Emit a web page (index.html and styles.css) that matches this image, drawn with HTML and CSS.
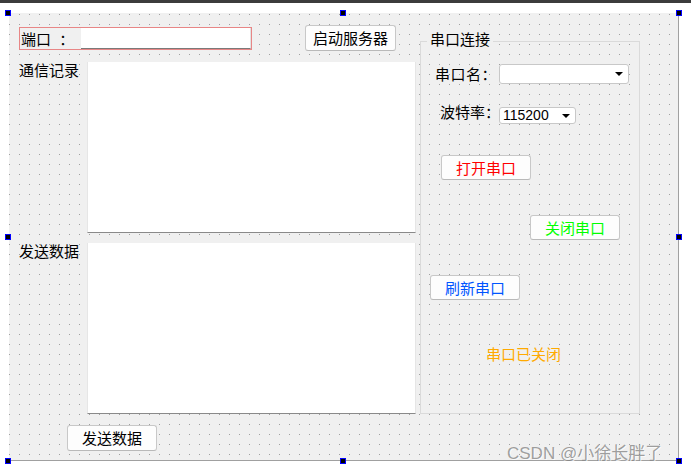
FILE: index.html
```html
<!DOCTYPE html>
<html lang="zh-CN">
<head>
<meta charset="utf-8">
<title>Form</title>
<link rel="stylesheet" href="styles.css">
</head>
<body>
<div class="topbar"></div>
<div class="canvas">
  <div class="left">
    <div class="toprow">
      <div class="portbox">
        <span class="lbl portlbl">端口 ：</span>
        <div class="lineedit"></div>
      </div>
      <button class="btn startbtn">启动服务器</button>
    </div>
    <div class="editrow first">
      <span class="lbl sidelbl">通信记录</span>
      <div class="textedit"></div>
    </div>
    <div class="editrow second">
      <span class="lbl sidelbl">发送数据</span>
      <div class="textedit"></div>
    </div>
    <button class="btn sendbtn">发送数据</button>
  </div>
  <div class="group">
    <span class="grouptitle">串口连接</span>
    <div class="frow r1">
      <span class="lbl namelbl">串口名：</span>
      <div class="combo wide"><span class="arrow"></span></div>
    </div>
    <div class="frow r2">
      <span class="lbl baudlbl">波特率：</span>
      <div class="combo narrow"><span class="val">115200</span><span class="arrow"></span></div>
    </div>
    <button class="btn gbtn open">打开串口</button>
    <button class="btn gbtn close">关闭串口</button>
    <button class="btn gbtn refresh">刷新串口</button>
    <div class="status">串口已关闭</div>
  </div>
  <span class="handle h-tl"></span>
  <span class="handle h-tm"></span>
  <span class="handle h-tr"></span>
  <span class="handle h-ml"></span>
  <span class="handle h-mr"></span>
  <span class="handle h-bl"></span>
  <span class="handle h-bm"></span>
  <span class="handle h-br"></span>
</div>
<div class="watermark">CSDN @小徐长胖了</div>
</body>
</html>
```
FILE: styles.css
```css
* { box-sizing: border-box; }
html, body { margin: 0; padding: 0; background: #ffffff; }
body {
  position: relative;
  width: 691px;
  height: 474px;
  overflow: hidden;
  font-family: "Noto Sans CJK SC", "Liberation Sans", sans-serif;
  font-size: 15px;
  color: #000;
}
.topbar { height: 3px; background: #3c3c3c; }

.canvas {
  position: relative;
  margin: 10px 0 0 9px;
  width: 670px;
  height: 448px;
  border-right: 1px solid #a0a0a0;
  border-bottom: 1px solid #a0a0a0;
  background-color: #f0f0f0;
  background-image: radial-gradient(circle at 0.5px 0.5px, #a0a0a0 0.6px, rgba(160,160,160,0) 0.9px);
  background-size: 10px 10px;
  background-position: 10px 1px;
  display: flex;
  align-items: flex-start;
}

.lbl { line-height: 16px; white-space: pre; }

.left {
  padding: 12px 0 0 10px;
  display: flex;
  flex-direction: column;
  align-items: flex-start;
}
.toprow { display: flex; align-items: flex-start; height: 26px; }
.portbox {
  margin-top: 2px;
  width: 233px;
  height: 23px;
  border: 1px solid #e88686;
  background: #f0f0f0;
  display: flex;
  align-items: center;
}
.portlbl { width: 61px; padding-left: 1px; word-spacing: 5px; }
.lineedit {
  width: 170px;
  height: 21px;
  background: #fff;
  border-bottom: 1px solid #7a7a7a;
  border-right: 1px solid #e3e3e3;
}

.btn {
  font-family: "Noto Sans CJK SC", "Liberation Sans", sans-serif;
  font-size: 15px;
  line-height: 16px;
  padding: 0;
  margin: 0;
  background: #fdfdfd;
  border: 1px solid #c8c8c8;
  border-bottom-color: #b9b9b9;
  border-radius: 3px;
  color: #000;
  display: flex;
  align-items: center;
  justify-content: center;
}
.startbtn { margin-left: 53px; width: 91px; height: 26px; }

.editrow { display: flex; align-items: flex-start; }
.editrow.first { margin-top: 11px; }
.editrow.second { margin-top: 10px; }
.sidelbl { width: 68px; padding-left: 0; margin-top: 0; }
.textedit {
  width: 329px;
  height: 171px;
  background: #fff;
  border-left: 1px solid #e6e6e6;
  border-right: 1px solid #e6e6e6;
  border-bottom: 1px solid #8a8a8a;
}
.sendbtn { margin-top: 11px; margin-left: 48px; width: 90px; height: 26px; }

.group {
  position: relative;
  margin-left: 4px;
  margin-top: 28px;
  width: 220px;
  height: 373px;
  border: 1px solid #dadada;
  display: flex;
  flex-direction: column;
  align-items: flex-start;
}
.grouptitle {
  position: absolute;
  left: 6px;
  top: -11px;
  padding: 0 3px;
  line-height: 16px;
  background: #f0f0f0;
}
.frow { display: flex; }
.frow.r1 { margin-top: 22px; margin-left: 14px; align-items: center; }
.frow.r2 { margin-top: 20px; margin-left: 19px; align-items: flex-start; }
.namelbl { width: 64px; letter-spacing: 0.5px; }
.baudlbl { width: 59px; }
.combo {
  position: relative;
  background: #fff;
  border: 1px solid #c8c8c8;
  border-radius: 3px;
}
.combo.wide { width: 130px; height: 20px; }
.combo.narrow { width: 77px; height: 17px; margin-top: 3px; }
.combo .val {
  position: absolute;
  left: 3px;
  top: 0;
  font-family: "Liberation Sans", sans-serif;
  font-size: 14px;
  line-height: 15px;
}
.arrow {
  position: absolute;
  right: 5px;
  top: 50%;
  margin-top: -2px;
  width: 0;
  height: 0;
  border-left: 4px solid transparent;
  border-right: 4px solid transparent;
  border-top: 4px solid #000;
}

.gbtn { width: 90px; height: 25px; }
.open { margin-top: 31px; margin-left: 20px; color: #ff0000; }
.close { margin-top: 35px; margin-left: 109px; color: #00ff00; }
.refresh { margin-top: 35px; margin-left: 9px; color: #0055ff; }
.status {
  margin-top: 46px;
  margin-left: 65px;
  line-height: 16px;
  color: #ffaa00;
}

.handle {
  position: absolute;
  width: 6px;
  height: 6px;
  background: #000;
  border: 1px solid #0000ff;
}
.h-tl { left: -4px; top: -3px; }
.h-tm { left: 331px; top: -3px; }
.h-tr { left: 667px; top: -3px; }
.h-ml { left: -4px; top: 221px; }
.h-mr { left: 667px; top: 221px; }
.h-bl { left: -4px; top: 445px; }
.h-bm { left: 331px; top: 445px; }
.h-br { left: 667px; top: 445px; }

.watermark {
  position: absolute;
  left: 507px;
  top: 443px;
  font-family: "Liberation Sans", "Noto Sans CJK SC", sans-serif;
  font-size: 17px;
  line-height: 22px;
  white-space: nowrap;
  color: rgba(130, 130, 130, 0.75);
  text-shadow: 1px 1px 0 rgba(255, 255, 255, 0.7);
}
```
